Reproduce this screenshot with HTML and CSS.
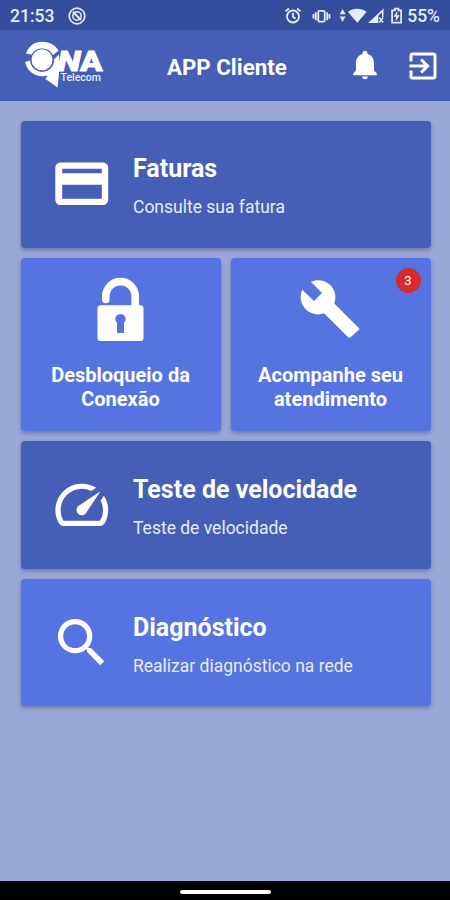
FILE: index.html
```html
<!DOCTYPE html>
<html lang="pt-BR">
<head>
    <meta charset="UTF-8">
    <meta name="viewport" content="width=device-width, initial-scale=1.0">
    <title>APP Cliente</title>
    <link rel="stylesheet" href="styles.css">
</head>
<body>
<div class="app">
    <div class="status-bar">
        <span class="clock">21:53</span>
        <svg class="status-app" width="18" height="18" viewBox="0 0 18 18" fill="none" stroke="#e8ecfa">
            <circle cx="9" cy="9" r="7.8" stroke-width="1.7"/>
            <circle cx="9" cy="9" r="4.2" stroke-width="1.5"/>
            <path d="M5 5l8 8" stroke-width="2"/>
        </svg>
        <svg class="status-icons" width="120" height="20" viewBox="0 0 120 20" fill="#e8ecfa">
            <g fill="none" stroke="#e8ecfa" stroke-width="1.8">
                <circle cx="9" cy="10.5" r="6"/>
                <path d="M9 7v4l2.6 1.6M1.5 5.4l3.4-2.9M16.5 5.4l-3.4-2.9"/>
                <rect x="34.3" y="4.8" width="6.4" height="10.8" rx="1"/>
                <path d="M31.8 6.2v8M43.2 6.2v8M29.5 8v4.4M45.5 8v4.4"/>
            </g>
            <path d="M58.600 3l2.900 5.200h-5.800zM58.600 15.800l2.900-5.200h-5.800z"/>
            <path d="M64 6c5-4.200 13.500-4.200 18.500 0l-9.200 10.800z"/>
            <path d="M84 17L99.500 2.500V8h-1.700V6.500l-3.500 3.300V17z"/>
            <path d="M95.300 11.500l3.800 5M99.100 11.500l-3.800 5M98.700 7v4" fill="none" stroke="#e8ecfa" stroke-width="1.4"/>
            <path d="M110.900 2.600h3.500v1.700h2.700v12.400h-9V4.300h2.800z" fill="none" stroke="#e8ecfa" stroke-width="1.700"/>
            <path d="M113.300 5l-3.800 5.700h2.600l-.4 4.800 4-6.300H113z"/>
        </svg>
        <span class="battery">55%</span>
    </div>

    <header class="header">
        <svg class="logo" width="82" height="48" viewBox="0 0 82 48">
            <g fill="#fff">
                <path d="M3 12.500C6 4.500 12 .8 19 .8c7 0 12.500 2.700 16.500 8.700l-5.500 4.700A12.300 12.300 0 0 0 8.500 13.500z"/>
                <path d="M2.200 21l4.800-1.500a12.300 12.300 0 0 0 19.800 8.800C30 25.500 31.300 22 31.300 18L36 13.500V33l-1.500 13.500L22.500 38l2-3.200C13 37 4 31 2.200 21z"/>
                <circle cx="19" cy="18.800" r="10.500"/>
            </g>
            <text class="logo-name" y="29.800"><tspan class="slant" x="34.500" textLength="23" lengthAdjust="spacingAndGlyphs">N</tspan><tspan x="57" textLength="22.500" lengthAdjust="spacingAndGlyphs">A</tspan></text>
            <text class="logo-sub" x="37.500" y="40" textLength="40.500" lengthAdjust="spacingAndGlyphs">Telecom</text>
        </svg>
        <h1>APP Cliente</h1>
        <svg class="bell" width="32" height="32" viewBox="0 0 32 32" fill="#fff">
            <path d="M16 1.800c-1.500 0-2.400 1-2.400 2.400v.7C9.500 6 7 9.300 7 14v7.500L4.200 24.500v1.700h23.600v-1.700L25 21.500V14c0-4.700-2.500-8-6.600-9.100v-.7c0-1.400-.9-2.400-2.400-2.400zM13.200 27.500a2.800 2.800 0 0 0 5.600 0z"/>
        </svg>
        <svg class="exit" width="36" height="36" viewBox="0 0 24 24" fill="#fff">
            <path d="M10.090 15.590L11.500 17l5-5-5-5-1.410 1.410L12.670 11H3v2h9.670l-2.580 2.590zM19 3H5a2 2 0 0 0-2 2v4h2V5h14v14H5v-4H3v4a2 2 0 0 0 2 2h14c1.100 0 2-.9 2-2V5c0-1.100-.9-2-2-2z"/>
        </svg>
    </header>

    <main class="menu">
        <a class="card wide dark">
            <svg class="card-icon" viewBox="0 0 24 24">
                <path d="M20 4H4c-1.110 0-1.990.89-1.990 2L2 18c0 1.110.89 2 2 2h16c1.110 0 2-.89 2-2V6c0-1.110-.89-2-2-2zm-.4 13.700H4.600v-5.300h15v5.300zm0-9.700h-15V6.300h15V8z"/>
            </svg>
            <div class="card-text">
                <h2>Faturas</h2>
                <p>Consulte sua fatura</p>
            </div>
        </a>

        <div class="row">
            <a class="card square">
                <svg class="square-icon" viewBox="0 0 64 64">
                    <path d="M17.800 22.500V19.300a14.700 14.700 0 0 1 29.400 0V31" fill="none" stroke="#fff" stroke-width="7.600" stroke-linecap="round"/>
                    <path fill-rule="evenodd" d="M12.500 28.300h40a3 3 0 0 1 3 3v29.800a3 3 0 0 1-3 3h-40a3 3 0 0 1-3-3V31.300a3 3 0 0 1 3-3zM29 46v10h7V46a5.200 5.200 0 1 0-7 0z"/>
                </svg>
                <h3>Desbloqueio da Conexão</h3>
            </a>
            <a class="card square">
                <span class="badge">3</span>
                <svg class="square-icon" viewBox="0 0 24 24">
                    <path d="M22.700 19l-9.100-9.100c.9-2.300.4-5-1.500-6.900-2-1.900-4.900-2.300-7.300-1.200L9 6 6 9 1.600 4.800C.5 7.200.9 10.100 2.900 12.100c1.900 1.900 4.600 2.400 6.900 1.500l9 9c.3.300.6.300.9 0l3-2.700c.4-.4.400-.6 0-.9z"/>
                </svg>
                <h3>Acompanhe seu atendimento</h3>
            </a>
        </div>

        <a class="card wide dark">
            <svg class="card-icon" viewBox="0 0 24 24">
                <path d="M20.380 8.570l-1.230 1.850a8 8 0 0 1-.22 7.580H5.070A8 8 0 0 1 15.580 6.850l1.850-1.230A10 10 0 0 0 3.350 19a2 2 0 0 0 1.720 1h13.850a2 2 0 0 0 1.740-1 10 10 0 0 0-.27-10.440zm-9.790 6.840a2 2 0 0 0 2.830 0l5.660-8.490-8.490 5.660a2 2 0 0 0 0 2.830z"/>
            </svg>
            <div class="card-text">
                <h2>Teste de velocidade</h2>
                <p>Teste de velocidade</p>
            </div>
        </a>

        <a class="card wide">
            <svg class="card-icon" viewBox="0 0 24 24">
                <path d="M15.500 14h-.79l-.28-.27A6.471 6.471 0 0 0 16 9.500 6.500 6.500 0 1 0 9.500 16c1.610 0 3.090-.59 4.230-1.570l.27.28v.79l5 4.990L20.490 19l-4.990-5zm-6 0C7.010 14 5 11.990 5 9.500S7.010 5 9.500 5 14 7.010 14 9.500 11.990 14 9.500 14z"/>
            </svg>
            <div class="card-text">
                <h2>Diagnóstico</h2>
                <p>Realizar diagnóstico na rede</p>
            </div>
        </a>
    </main>

    <div class="nav-bar"><span class="nav-pill"></span></div>
</div>
</body>
</html>
```
FILE: styles.css
```css
* {
    box-sizing: border-box;
}
body {
    margin: 0;
    font-family: Roboto, "Liberation Sans", sans-serif;
    color: #fff;
}
h1, h2, h3, p {
    margin: 0;
}
.app {
    width: 450px;
    height: 900px;
    display: flex;
    flex-direction: column;
    background-color: #9aa7d9;
    overflow: hidden;
}
.status-bar {
    height: 30px;
    flex: none;
    display: flex;
    align-items: center;
    padding: 2px 10px 0 10px;
    background-color: #364c9c;
    color: #e8ecfa;
    font-size: 17.5px;
    font-weight: 500;
}
.clock {
    width: 58px;
}
.status-icons {
    margin-left: auto;
    margin-right: 3px;
}
.header {
    height: 70.5px;
    flex: none;
    display: flex;
    align-items: center;
    padding: 0 9px 0 23px;
    background-color: #455fb6;
}
.header h1 {
    width: 122px;
    margin: 4px 0 0 62px;
    font-size: 22.3px;
    font-weight: 700;
    white-space: nowrap;
}
.logo {
    flex: none;
}
.logo-name {
    font-size: 28px;
    font-weight: 900;
    fill: #fff;
    stroke: #fff;
    stroke-width: 0.8px;
}
.slant {
    font-style: italic;
}
.logo-sub {
    font-size: 10px;
    font-weight: 500;
    fill: #e8ecfa;
}
.bell {
    margin-left: auto;
    margin-right: 24px;
}
.exit {
    margin-top: 1px;
}
.menu {
    flex: 1;
    display: flex;
    flex-direction: column;
    gap: 10.3px;
    padding: 20px 19.5px 0 20.5px;
}
.card {
    background-color: #5573e1;
    border-radius: 4px;
    box-shadow: 0 2px 4px rgba(40, 50, 90, 0.4);
}
.dark {
    background-color: #455fb6;
}
.wide {
    height: 127.3px;
    display: flex;
    align-items: center;
    padding-left: 29px;
}
.card-icon {
    width: 63.5px;
    height: 63.5px;
    flex: none;
    fill: #fff;
}
.card-text {
    margin: 5px 0 0 20px;
}
.card-text h2 {
    font-size: 25px;
    line-height: 32px;
    font-weight: 700;
}
.card-text p {
    margin-top: 9px;
    font-size: 17.5px;
    line-height: 26px;
    color: #e8ecfa;
}
.row {
    display: grid;
    grid-template-columns: 1fr 1fr;
    gap: 10px;
}
.square {
    position: relative;
    height: 173px;
    display: flex;
    flex-direction: column;
    align-items: center;
    padding: 19px 20px 0;
    text-align: center;
}
.square-icon {
    width: 64px;
    height: 64px;
    flex: none;
    margin-right: 2px;
    fill: #fff;
    overflow: visible;
}
.square h3 {
    margin-top: 22px;
    font-size: 20px;
    line-height: 24px;
    font-weight: 700;
}
.badge {
    position: absolute;
    top: 10px;
    right: 10px;
    width: 25px;
    height: 25px;
    border-radius: 50%;
    background-color: #d32b2f;
    font-size: 13px;
    line-height: 25px;
}
.nav-bar {
    height: 19px;
    flex: none;
    display: flex;
    align-items: center;
    justify-content: center;
    padding-top: 2px;
    background-color: #000;
}
.nav-pill {
    width: 91px;
    height: 4px;
    border-radius: 2px;
    background-color: #fff;
}
```
